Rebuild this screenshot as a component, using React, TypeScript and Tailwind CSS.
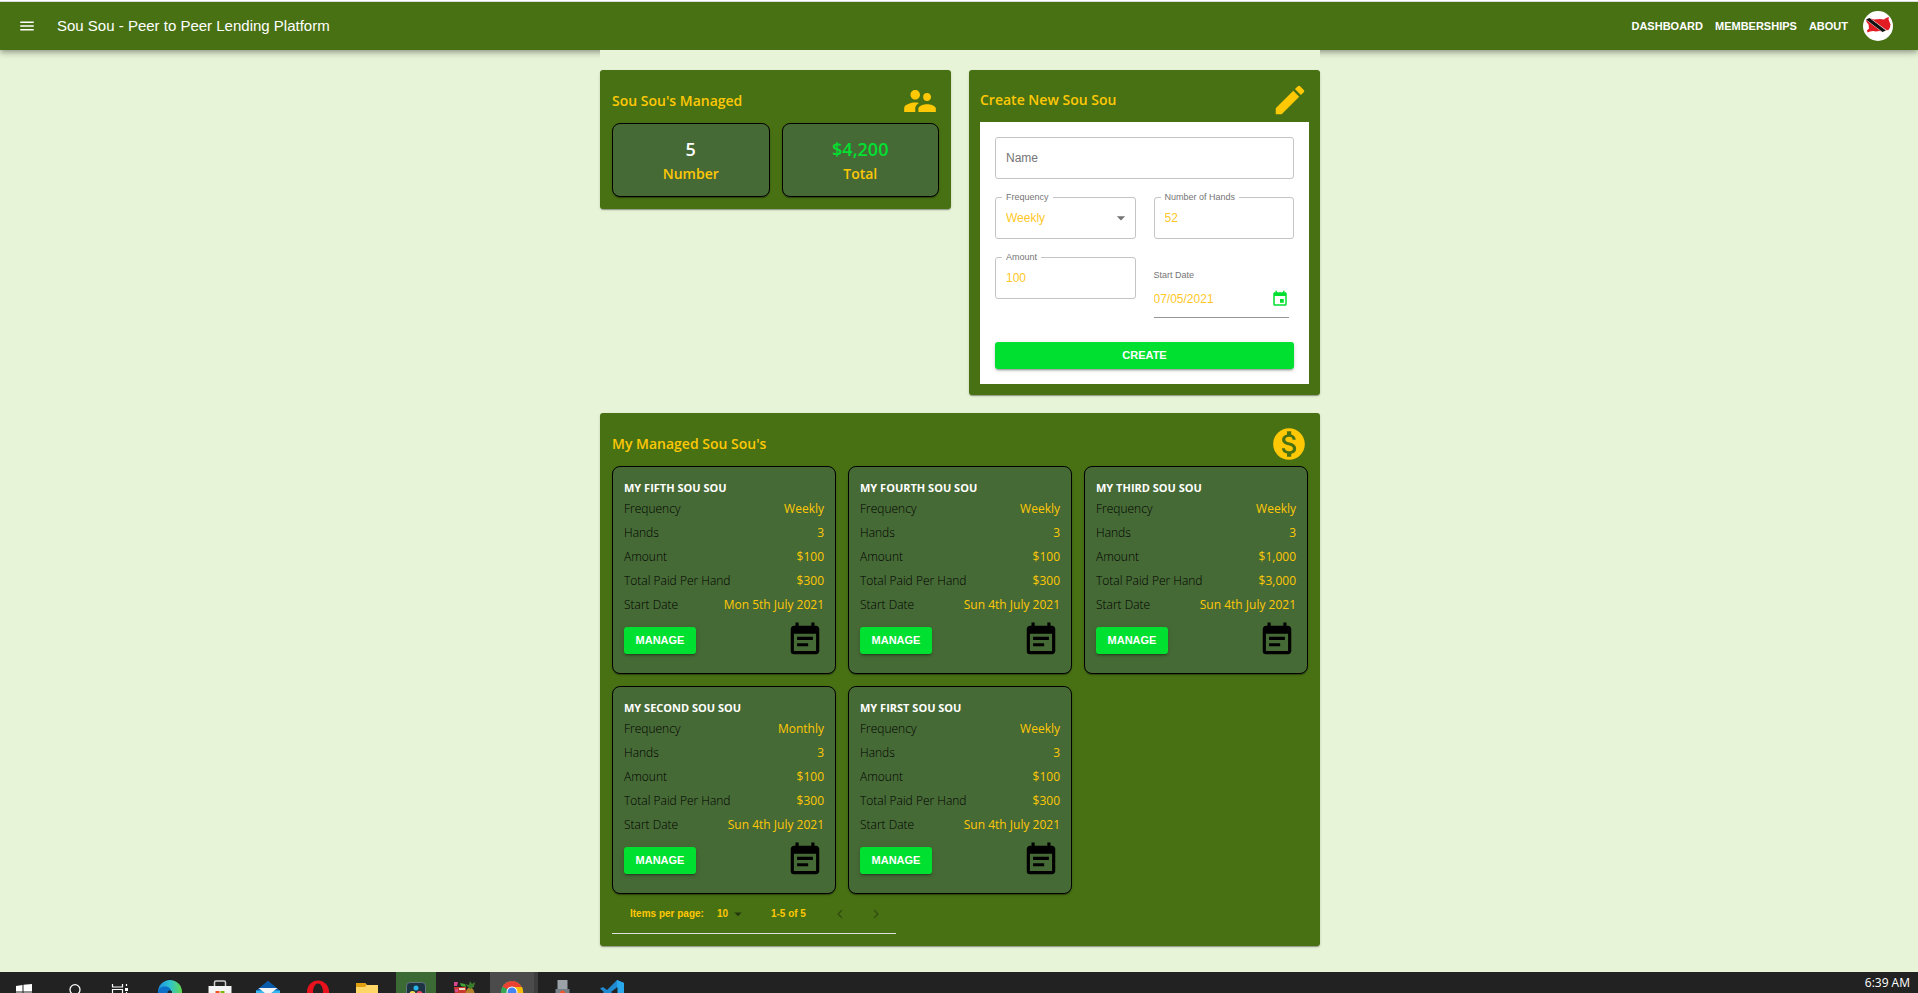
import React from 'react';
import {
    MdArrowDropDown,
    MdChevronLeft,
    MdChevronRight,
    MdEdit,
    MdEvent,
    MdEventNote,
    MdMenu,
    MdMonetizationOn,
    MdSupervisorAccount,
} from 'react-icons/md';

interface SouSou {
    name: string;
    frequency: string;
    hands: number;
    amount: string;
    total: string;
    startDate: string;
}

const souSous: SouSou[] = [
    { name: 'My Fifth Sou Sou', frequency: 'Weekly', hands: 3, amount: '$100', total: '$300', startDate: 'Mon 5th July 2021' },
    { name: 'My Fourth Sou Sou', frequency: 'Weekly', hands: 3, amount: '$100', total: '$300', startDate: 'Sun 4th July 2021' },
    { name: 'My Third Sou Sou', frequency: 'Weekly', hands: 3, amount: '$1,000', total: '$3,000', startDate: 'Sun 4th July 2021' },
    { name: 'My Second Sou Sou', frequency: 'Monthly', hands: 3, amount: '$100', total: '$300', startDate: 'Sun 4th July 2021' },
    { name: 'My First Sou Sou', frequency: 'Weekly', hands: 3, amount: '$100', total: '$300', startDate: 'Sun 4th July 2021' },
];

const cardShadow = 'shadow-[0_2px_1px_-1px_rgba(0,0,0,0.2),0_1px_1px_0_rgba(0,0,0,0.14),0_1px_3px_0_rgba(0,0,0,0.12)]';
const buttonShadow = 'shadow-[0_3px_1px_-2px_rgba(0,0,0,0.2),0_2px_2px_0_rgba(0,0,0,0.14),0_1px_5px_0_rgba(0,0,0,0.12)]';
const inputClass = 'h-[42px] w-full rounded-[3px] border border-[#c4c4c4] bg-white px-2.5 text-xs text-[#ffc726] outline-none placeholder:text-[#757575]';

function FlagAvatar() {
    return (
        <svg viewBox="0 0 30 30" className="size-[30px]" role="img" aria-label="Trinidad and Tobago">
            <circle cx="15" cy="15" r="15" fill="#fff" />
            <path
                d="M3 8.500l3-1.500 5 1.500 6-.5 4 .5 2-1.500 3-1-.5 2.500.8 2 1.200 3-.5 3-1.500 2.500-3 .5-2.500 1-4-.5-3 .5-3-.5-3 .5-2.500 1-.5-2 2-2-.5-4-2-2.500z"
                fill="#e31b23"
            />
            <path d="M2.500 8.500L6.500 6.500 24 19.500l-4.500 2z" fill="#fff" />
            <path d="M3 8.500L6.500 7 23 19.500l-3.500 1.500z" fill="#111" />
        </svg>
    );
}

function Header() {
    return (
        <header className="shrink-0 shadow-[0_2px_4px_-1px_rgba(0,0,0,0.2),0_4px_5px_0_rgba(0,0,0,0.14),0_1px_10px_0_rgba(0,0,0,0.12)]">
            <div className="h-0.5 border-b border-[#dcdcdc] bg-white" />
            <div className="flex h-12 items-center bg-[#487114] pr-[25px] pl-[18px] text-white">
                <button type="button" aria-label="Open menu">
                    <MdMenu className="size-[18px]" />
                </button>
                <h1 className="ml-[21px] text-[15px]">Sou Sou - Peer to Peer Lending Platform</h1>
                <nav className="ml-auto flex items-center gap-3 text-[11px] font-bold uppercase">
                    <a href="#dashboard">Dashboard</a>
                    <a href="#memberships">Memberships</a>
                    <a href="#about">About</a>
                </nav>
                <button type="button" className="ml-[15px]" aria-label="Account">
                    <FlagAvatar />
                </button>
            </div>
        </header>
    );
}

function CardHeader({ title, icon }: { title: string; icon: React.ReactNode }) {
    return (
        <div className="flex h-[41px] items-start justify-between text-[#ffc805]">
            <h2 className="font-['Open_Sans'] text-sm leading-[38px] font-semibold">{title}</h2>
            {icon}
        </div>
    );
}

function Stat({ value, label, valueClass }: { value: string; label: string; valueClass: string }) {
    return (
        <div className={`flex h-[74px] flex-col items-center justify-center rounded-lg border border-black bg-[#466a36] pt-0.5 font-['Open_Sans'] font-semibold ${cardShadow}`}>
            <p className={`text-lg leading-[26px] ${valueClass}`}>{value}</p>
            <p className="text-sm leading-6 text-[#ffc805]">{label}</p>
        </div>
    );
}

function Field({ id, label, children }: { id: string; label: string; children: React.ReactNode }) {
    return (
        <div className="relative">
            <label htmlFor={id} className="absolute -top-1.5 left-[7px] bg-white px-1 text-[9px] leading-3 text-[#757575]">
                {label}
            </label>
            {children}
        </div>
    );
}

function CreateForm() {
    return (
        <form className="grid grid-cols-2 gap-[18px] bg-white p-[15px]">
            <input id="name" aria-label="Name" placeholder="Name" className={`col-span-2 ${inputClass}`} />
            <Field id="frequency" label="Frequency">
                <select id="frequency" defaultValue="Weekly" className={`appearance-none ${inputClass}`}>
                    <option>Weekly</option>
                    <option>Monthly</option>
                </select>
                <MdArrowDropDown className="pointer-events-none absolute top-[11px] right-[5px] size-5 text-[#757575]" />
            </Field>
            <Field id="hands" label="Number of Hands">
                <input id="hands" defaultValue="52" className={inputClass} />
            </Field>
            <Field id="amount" label="Amount">
                <input id="amount" defaultValue="100" className={inputClass} />
            </Field>
            <div className="pt-3 pr-[5px]">
                <label htmlFor="start" className="block text-[9px] leading-3 text-[#757575]">
                    Start Date
                </label>
                <div className="flex h-[37px] items-center border-b border-[#949494]">
                    <input id="start" defaultValue="07/05/2021" className="min-w-0 flex-1 text-xs text-[#ffc726] outline-none" />
                    <button type="button" aria-label="Change date" className="text-[#00e030]">
                        <MdEvent className="size-[18px]" />
                    </button>
                </div>
            </div>
            <button type="submit" className={`col-span-2 mt-1.5 h-[27px] rounded-[3px] bg-[#00e030] text-[11px] font-bold text-white uppercase ${buttonShadow}`}>
                Create
            </button>
        </form>
    );
}

function SouSouCard({ item }: { item: SouSou }) {
    const rows: [string, string | number][] = [
        ['Frequency', item.frequency],
        ['Hands', item.hands],
        ['Amount', item.amount],
        ['Total Paid Per Hand', item.total],
        ['Start Date', item.startDate],
    ];

    return (
        <article className={`rounded-lg border border-black bg-[#466a36] px-[11px] pt-3 pb-3.5 font-['Open_Sans'] ${cardShadow}`}>
            <h3 className="text-[11px] leading-[18px] font-bold text-white uppercase">{item.name}</h3>
            <dl className="text-xs leading-6">
                {rows.map(([label, value]) => (
                    <div key={label} className="flex justify-between">
                        <dt className="font-light text-black">{label}</dt>
                        <dd className="text-[#ffc805]">{value}</dd>
                    </div>
                ))}
            </dl>
            <div className="mt-1 flex items-center justify-between">
                <button type="button" className={`h-[27px] w-[72px] rounded-[3px] bg-[#00e030] font-['Liberation_Sans'] text-[11px] font-bold text-white uppercase ${buttonShadow}`}>
                    Manage
                </button>
                <MdEventNote className="size-[38px] text-black" />
            </div>
        </article>
    );
}

function Pagination() {
    return (
        <div className="flex h-10 w-[284px] items-center border-b border-[#e0e0e0] pl-[18px] text-[10px] font-bold text-[#ffc805]">
            <label htmlFor="per-page">Items per page:</label>
            <div className="relative ml-[13px] w-[30px]">
                <select id="per-page" defaultValue="10" className="block w-full appearance-none outline-none">
                    <option>5</option>
                    <option>10</option>
                </select>
                <MdArrowDropDown className="pointer-events-none absolute -top-px right-0 size-[18px] text-black/50" />
            </div>
            <span className="ml-6">1-5 of 5</span>
            <div className="ml-[25px] flex gap-[18px] text-black/30">
                <button type="button" disabled aria-label="Previous page">
                    <MdChevronLeft className="size-[18px]" />
                </button>
                <button type="button" disabled aria-label="Next page">
                    <MdChevronRight className="size-[18px]" />
                </button>
            </div>
        </div>
    );
}

function TaskbarIcon({ children, className = '' }: { children: React.ReactNode; className?: string }) {
    return (
        <div className={`flex h-10 shrink-0 justify-center pt-2 ${className}`}>
            <svg viewBox="0 0 24 24" className="size-6" aria-hidden="true">
                {children}
            </svg>
        </div>
    );
}

function Taskbar() {
    return (
        <footer className="mt-auto flex h-[22px] shrink-0 items-start overflow-hidden bg-[#222222] text-white">
            <TaskbarIcon className="w-12">
                <path d="M4 6l6.500-1v6.500H4zM11.500 4.800L20 4v7.500h-8.500zM4 12.500h6.500V19L4 18zM11.500 12.500H20V20l-8.500-1z" fill="#fff" />
            </TaskbarIcon>
            <TaskbarIcon className="w-[50px]">
                <path d="M9.500 13.500l-5 6M14 4.700a5 5 0 1 1 0 10 5 5 0 1 1 0-10z" fill="none" stroke="#fff" strokeWidth="1.300" />
            </TaskbarIcon>
            <TaskbarIcon className="w-11">
                <path d="M4.500 4v3h10V4M4.500 20V9.500h10V20M18.500 4v2M18.500 12v8" fill="none" stroke="#fff" strokeWidth="1.200" />
                <path d="M17 8h3v3h-3z" fill="#fff" />
            </TaskbarIcon>
            <TaskbarIcon className="w-14">
                <defs>
                    <linearGradient id="edge" x1="0" x2="1" y1="0" y2="0">
                        <stop offset="0" stopColor="#1b8fe0" />
                        <stop offset="0.500" stopColor="#2fc3cf" />
                        <stop offset="1" stopColor="#62d84e" />
                    </linearGradient>
                </defs>
                <circle cx="12" cy="12" r="12" fill="url(#edge)" />
                <path d="M0 12c1-5 5-6 8-5.500 4 .5 5 3 5 5.500H9c-1 4 0 8 3 12C5 24 0 19 0 12z" fill="#0c70c8" />
                <path d="M9 14c0-3 3-5 5-2.500V16z" fill="#1d2b35" />
            </TaskbarIcon>
            <TaskbarIcon className="w-11">
                <path d="M6.500 7V2.500c0-1 .5-1.500 1.500-1.500h8c1 0 1.500.5 1.500 1.500V7" fill="none" stroke="#d0d0d0" strokeWidth="1.500" />
                <path d="M.5 6h23v18H.5z" fill="#f4f4f4" />
                <path d="M7.500 11h4v4h-4z" fill="#f25022" />
                <path d="M12.500 11h4v4h-4z" fill="#7fba00" />
            </TaskbarIcon>
            <TaskbarIcon className="w-[52px]">
                <path d="M0 10.500L12 .8l12 9.700V22H0z" fill="#0a5cab" />
                <path d="M0 10.500h24V22H0z" fill="#35b8f1" />
                <path d="M2.500 8h19L12 15.500z" fill="#f5f5f5" />
            </TaskbarIcon>
            <TaskbarIcon className="w-12">
                <ellipse cx="12" cy="12" rx="11" ry="11.500" fill="#e8121d" />
                <ellipse cx="12" cy="12" rx="5" ry="8.500" fill="#222222" />
            </TaskbarIcon>
            <TaskbarIcon className="w-[50px]">
                <path d="M1 3h9l2 2h11v17H1z" fill="#ffd766" />
                <path d="M1 3h9l1.500 2-1.500 2H1z" fill="#e0a010" />
                <path d="M5 13h14v8H5z" fill="#3f9be0" />
            </TaskbarIcon>
            <TaskbarIcon className="ml-1 w-10 bg-[#3c6a35]">
                <rect x="2.500" y="2.500" width="19" height="20" rx="3.500" fill="#1c3344" stroke="#65737d" />
                <circle cx="12" cy="8" r="2.500" fill="#28b5e8" />
                <circle cx="8.500" cy="14" r="3" fill="#f3da4a" />
                <circle cx="15.500" cy="14" r="3" fill="#f2465a" />
            </TaskbarIcon>
            <TaskbarIcon className="w-[54px]">
                <path d="M3 7h12v15H5z" fill="#c93a2c" />
                <path d="M3 2h4l-1 4H3zM4 9h3v3H4z" fill="#d8488e" />
                <path d="M9 3l5 1 1 3-5-1z" fill="#43a335" />
                <path d="M8 8h6v2H8z" fill="#f3d7c4" />
                <ellipse cx="19" cy="14" rx="4.500" ry="6.500" fill="#b5822c" />
                <path d="M19 9l-5-5 4 1 1-4 2 3 3-2-1 5z" fill="#3b7d2b" />
            </TaskbarIcon>
            <TaskbarIcon className="w-12 border-r-4 border-[#3d3d3d] bg-[#4b4b4b]">
                <circle cx="12" cy="12" r="11" fill="#34a853" />
                <path d="M12 12L2.500 6.500a11 11 0 0 1 19 0z" fill="#ea4335" />
                <path d="M12 7h10a11 11 0 0 1-10 16z" fill="#fbbc05" />
                <circle cx="12" cy="12" r="5.500" fill="#fff" />
                <circle cx="12" cy="12" r="4.500" fill="#4285f4" />
            </TaskbarIcon>
            <TaskbarIcon className="w-12">
                <path d="M7.500 0h10v10h-10z" fill="#9ca3a8" />
                <path d="M5.500 9h14v15h-14z" fill="#777f86" />
                <circle cx="12.500" cy="13" r="2.500" fill="#f0552b" />
            </TaskbarIcon>
            <TaskbarIcon className="w-[52px]">
                <path d="M17 0l7 3v18l-7 3L7 14l-4 3-3-1.500L4 12 0 8.500 3 7l4 3z" fill="#1f8ad2" />
                <path d="M17 0l7 3v18l-7 3z" fill="#2aa8ee" />
                <path d="M17.500 7v10L11 12z" fill="#222222" />
            </TaskbarIcon>
            <time className="mr-2 ml-auto font-['Open_Sans'] text-xs leading-[22px]">6:39 AM</time>
        </footer>
    );
}

export default function App() {
    return (
        <div className="flex min-h-screen flex-col bg-[#e7f4d7] font-['Liberation_Sans',sans-serif]">
            <Header />
            <div className="pl-0.5">
                <main className="mx-auto flex w-full max-w-[720px] flex-col gap-[18px] bg-[#e7f4d7] pt-5 pb-[26px]">
                    <div className="grid grid-cols-2 items-start gap-[18px]">
                        <section className={`rounded-[3px] bg-[#487114] p-3 ${cardShadow}`}>
                            <CardHeader title="Sou Sou's Managed" icon={<MdSupervisorAccount className="size-[38px]" />} />
                            <div className="grid grid-cols-2 gap-3">
                                <Stat value="5" label="Number" valueClass="text-white" />
                                <Stat value="$4,200" label="Total" valueClass="text-[#00e030]" />
                            </div>
                        </section>
                        <section className={`rounded-[3px] bg-[#487114] p-[11px] ${cardShadow}`}>
                            <CardHeader title="Create New Sou Sou" icon={<MdEdit className="size-[38px]" />} />
                            <CreateForm />
                        </section>
                    </div>
                    <section className={`rounded-[3px] bg-[#487114] p-3 ${cardShadow}`}>
                        <CardHeader title="My Managed Sou Sou's" icon={<MdMonetizationOn className="size-[38px]" />} />
                        <div className="grid grid-cols-3 gap-3">
                            {souSous.map((item) => (
                                <SouSouCard key={item.name} item={item} />
                            ))}
                        </div>
                        <Pagination />
                    </section>
                </main>
            </div>
            <Taskbar />
        </div>
    );
}
